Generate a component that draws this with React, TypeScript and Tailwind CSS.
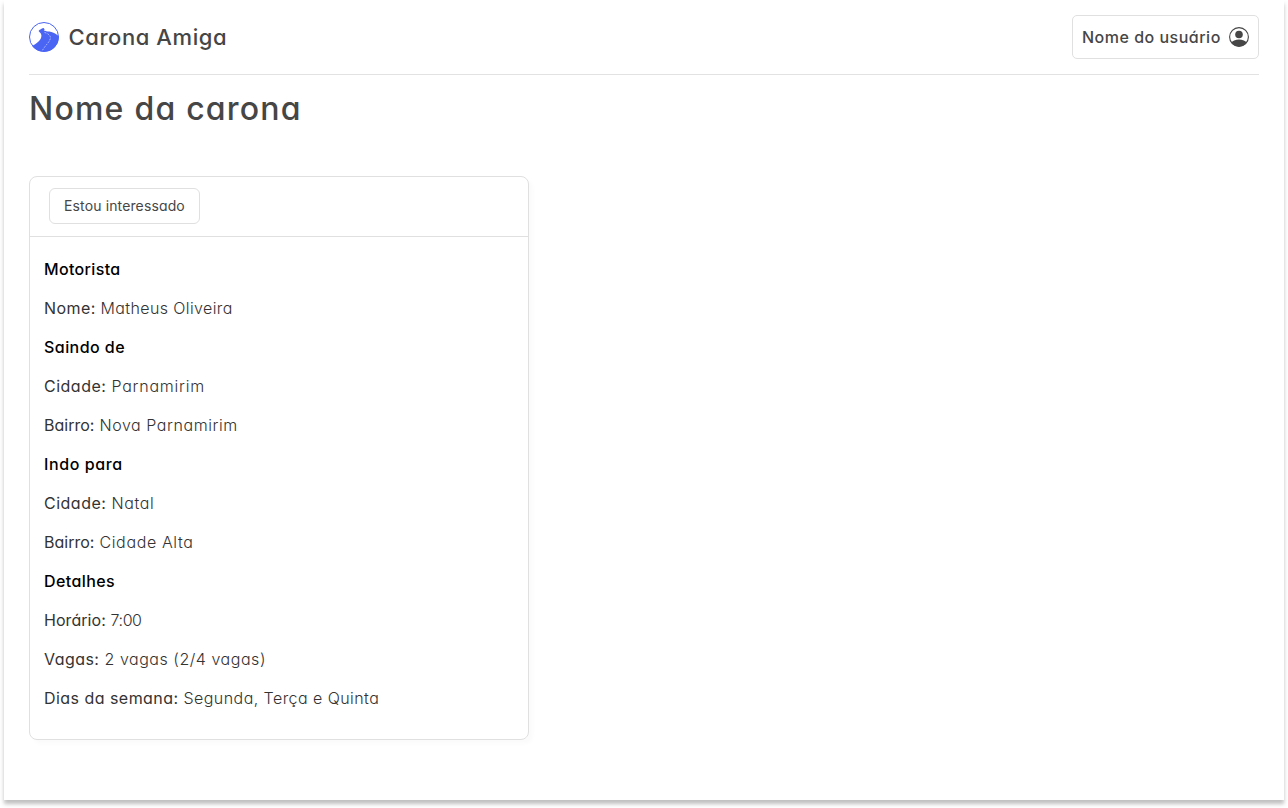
type Field = {
  label: string;
  value: string;
  labelClass: string;
  valueClass: string;
};

type Section = {
  title: string;
  titleClass: string;
  fields: Field[];
};

const sections: Section[] = [
  {
    title: 'Motorista',
    titleClass: 'tracking-[0.35px]',
    fields: [
      { label: 'Nome:', value: 'Matheus Oliveira', labelClass: 'w-[56.5px] tracking-[0.425px]', valueClass: 'tracking-[0.385px]' },
    ],
  },
  {
    title: 'Saindo de',
    titleClass: 'tracking-[0.45px]',
    fields: [
      { label: 'Cidade:', value: 'Parnamirim', labelClass: 'w-[67.5px] tracking-[0.5px]', valueClass: 'tracking-[0.756px]' },
      { label: 'Bairro:', value: 'Nova Parnamirim', labelClass: 'w-[55.5px]', valueClass: 'tracking-[0.554px]' },
    ],
  },
  {
    title: 'Indo para',
    titleClass: 'tracking-[0.6px]',
    fields: [
      { label: 'Cidade:', value: 'Natal', labelClass: 'w-[67.5px] tracking-[0.5px]', valueClass: 'tracking-[0.6px]' },
      { label: 'Bairro:', value: 'Cidade Alta', labelClass: 'w-[55.5px]', valueClass: 'tracking-[0.62px]' },
    ],
  },
  {
    title: 'Detalhes',
    titleClass: 'tracking-[0.42px]',
    fields: [
      { label: 'Horário:', value: '7:00', labelClass: 'w-[66.5px] tracking-[0.05px]', valueClass: 'tracking-[-0.4px]' },
      { label: 'Vagas:', value: '2 vagas (2/4 vagas)', labelClass: 'w-[60.5px] tracking-[0.444px]', valueClass: 'tracking-[0.53px]' },
      { label: 'Dias da semana:', value: 'Segunda, Terça e Quinta', labelClass: 'w-[139.5px] tracking-[0.46px]', valueClass: 'tracking-[0.44px]' },
    ],
  },
];

function RoadLogo() {
  return (
    <svg className="size-[30px] shrink-0" viewBox="0 0 30 30" fill="none">
      <clipPath id="logo-disc">
        <circle cx="15" cy="15" r="14.8" />
      </clipPath>
      <g clipPath="url(#logo-disc)">
        <path
          d="M14.6 5.8C13.2 6.3 12.6 7 11.4 7.4C9.9 7.9 9.3 8.8 10.2 9.8C11.2 10.8 12.3 11.9 12.4 13.4C12.5 15.6 11.5 17.4 9.8 19.2C7.6 21.5 5 23.2 1.5 24.4L7 31H24L31 21V15.4C28.4 12.4 24.6 10.6 20.4 9.6C18.2 9.1 16.3 9 15 8.4C14.4 8 15.8 7.9 15.7 7.2C15.6 6.7 14.3 6.5 14.6 5.8Z"
          fill="#4a64f4"
        />
        <path
          d="M15.5 10.4C18.6 11.4 21.4 13 21.4 15.8C21.4 19.4 16.4 23.2 13.4 28.4"
          stroke="#dfe4ff"
          strokeWidth="0.65"
          strokeDasharray="1.9 1.2"
        />
      </g>
      <circle cx="15" cy="15" r="14.5" stroke="#4a64f4" strokeWidth="1" />
    </svg>
  );
}

function UserIcon() {
  return (
    <svg className="size-5 shrink-0" viewBox="0 0 20 20" fill="none">
      <clipPath id="user-disc">
        <circle cx="10" cy="10" r="9.6" />
      </clipPath>
      <circle cx="10" cy="10" r="9.4" stroke="#464646" strokeWidth="1.1" />
      <circle cx="10" cy="7.5" r="3.8" fill="#464646" />
      <path clipPath="url(#user-disc)" d="M2 16.4C3.3 13.7 6.6 12.6 10 12.6C13.4 12.6 16.7 13.7 18 16.4V20H2Z" fill="#464646" />
    </svg>
  );
}

export default function App() {
  return (
    <div className="h-[808px] overflow-hidden bg-white px-1 font-['Inter','Liberation_Sans',sans-serif] text-[#464646] [font-feature-settings:'cv11']">
      <main className="h-[800px] w-[1280px] bg-white px-[25px] shadow-[0_4px_4px_rgba(0,0,0,0.25)]">
        <header className="flex h-[75px] items-start justify-between border-b border-[#e2e2e2] pt-[15px]">
          <div className="flex h-11 items-center gap-[9.5px]">
            <RoadLogo />
            <span className="text-[22px] leading-[33px] font-medium tracking-[0.58px]">Carona Amiga</span>
          </div>
          <button className="flex h-11 w-[187px] items-center justify-between rounded-[5px] border border-[#e0e0e0] pr-[9px] pl-[9px] text-base font-medium tracking-[0.5px]">
            Nome do usuário
            <UserIcon />
          </button>
        </header>

        <h1 className="mt-[10px] text-[32px] leading-[48px] font-medium tracking-[1.22px]">Nome da carona</h1>

        <section className="mt-[43px] h-[564px] w-[500px] rounded-lg border border-[#e0e0e0] shadow-[4px_4px_4px_rgba(0,0,0,0.02)]">
          <div className="h-[60px] border-b border-[#e0e0e0] pt-[11px] pl-[19px]">
            <button className="flex h-9 w-[151px] items-center rounded-md border border-[#e0e0e0] pl-[14px] text-sm tracking-[0.13px]">
              Estou interessado
            </button>
          </div>
          <div className="flex flex-col gap-[15px] pt-5 pl-[14px] text-base leading-6">
            {sections.map((section) => (
              <div key={section.title} className="flex flex-col gap-[15px]">
                <h2 className="font-medium text-black">
                  <span className={section.titleClass}>{section.title}</span>
                </h2>
                {section.fields.map((field) => (
                  <p key={field.label} className="flex whitespace-nowrap">
                    <span className={`shrink-0 text-[#333333] ${field.labelClass}`}>{field.label}</span>
                    <span className={`font-light text-[#333333] ${field.valueClass}`}>{field.value}</span>
                  </p>
                ))}
              </div>
            ))}
          </div>
        </section>
      </main>
    </div>
  );
}
